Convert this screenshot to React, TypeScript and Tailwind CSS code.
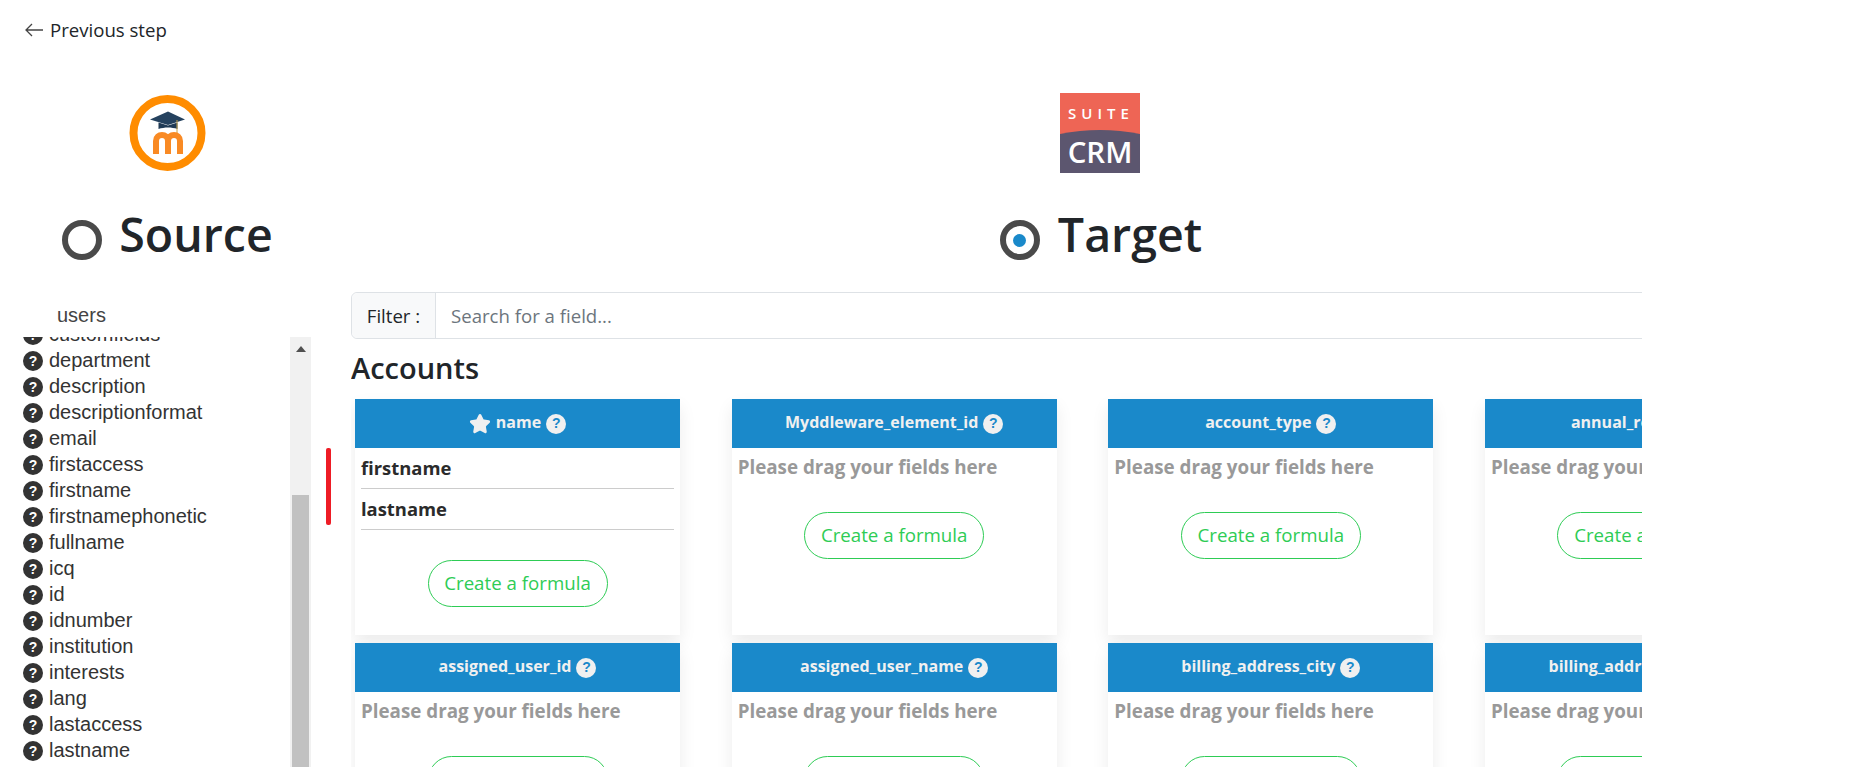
import { Star } from 'lucide-react'

const sourceFields = [
  'customfields', 'department', 'description', 'descriptionformat', 'email', 'firstaccess', 'firstname',
  'firstnamephonetic', 'fullname', 'icq', 'id', 'idnumber', 'institution', 'interests', 'lang', 'lastaccess',
  'lastname', 'lastnamephonetic',
]

const targetFields = [
  { name: 'name', required: true, mapped: ['firstname', 'lastname'] },
  { name: 'Myddleware_element_id' },
  { name: 'account_type' },
  { name: 'annual_revenue' },
  { name: 'assigned_user_id' },
  { name: 'assigned_user_name' },
  { name: 'billing_address_city' },
  { name: 'billing_address_street' },
]

function MoodleLogo() {
  return (
    <svg width="78" height="78" viewBox="0 0 78 78">
      <circle cx="38.5" cy="39" r="34" fill="#fff" stroke="#ff8c00" strokeWidth="8" />
      <path d="M21 25.500 39 17.500 56 25.500 39 31Z" fill="#25425f" />
      <path d="M29.500 28.500v6.500c6-2 13-2 19 0v-6.500l-9.500 3Z" fill="#1f3a55" />
      <path d="M48 26v13" stroke="#c9a24a" strokeWidth="1" />
      <path d="M27 60V47c0-8 12-8 12 0v13M39 47c0-8 12-8 12 0v13" fill="none" stroke="#f98a24" strokeWidth="6" />
    </svg>
  )
}

function SuiteLogo() {
  return (
    <svg width="80" height="80" viewBox="0 0 80 80">
      <rect width="80" height="80" fill="#ee6555" />
      <path d="M0 41Q40 33 80 41V80H0Z" fill="#5c566f" />
      <text x="41" y="26" textAnchor="middle" fill="#fff" fontFamily="Open Sans, sans-serif" fontWeight="600" fontSize="15" letterSpacing="5">SUITE</text>
      <text x="40" y="70" textAnchor="middle" fill="#fff" fontFamily="Open Sans, sans-serif" fontWeight="600" fontSize="29.5">CRM</text>
    </svg>
  )
}

function Radio({ checked }: { checked?: boolean }) {
  return (
    <span className="flex h-[40px] w-[40px] shrink-0 items-center justify-center rounded-full border-[6px] border-[#4a4a4a] bg-white">
      {checked && <span className="h-[13px] w-[13px] rounded-full bg-[#1a89ca]" />}
    </span>
  )
}

function Help({ light }: { light?: boolean }) {
  return (
    <span
      className={
        light
          ? "flex h-[20px] w-[20px] shrink-0 items-center justify-center rounded-full bg-[#f0f0f0] font-['Liberation_Sans',sans-serif] text-[14px] font-bold text-[#1a89ca]"
          : "flex h-[20px] w-[20px] shrink-0 items-center justify-center rounded-full bg-[#333333] font-['Liberation_Sans',sans-serif] text-[14px] font-bold text-white"
      }
    >
      ?
    </span>
  )
}

function FieldCard({ name, required, mapped }: { name: string; required?: boolean; mapped?: string[] }) {
  return (
    <div className="bg-white pb-[28px] shadow-[0_8px_16px_rgba(0,0,0,0.08)]">
      <div className="flex h-[49px] items-center justify-center gap-[5px] bg-[#1a89ca] text-[16px] font-bold text-[#f0f0f0]">
        {required && <Star className="h-[22px] w-[22px] fill-[#f0f0f0] text-[#f0f0f0]" />}
        <span className="-mt-[3px]">{name}</span>
        <Help light />
      </div>
      {mapped ? (
        <div className="px-[6px]">
          {mapped.map((m) => (
            <div key={m} className="flex h-[41px] items-center border-b border-[#cccccc] text-[18.4px] font-bold text-[#2b2b2b]">
              {m}
            </div>
          ))}
        </div>
      ) : (
        <div className="flex h-[33px] items-end px-[6px] text-[18.8px] leading-[27px] font-bold text-[#999999]">
          Please drag your fields here
        </div>
      )}
      <div className={mapped ? 'mt-[30px] flex justify-center' : 'mt-[31px] flex justify-center'}>
        <button className="h-[47px] w-[180px] rounded-full border border-[#2ecc55] bg-white text-[18.7px] text-[#2ecc55]">
          Create a formula
        </button>
      </div>
    </div>
  )
}

export default function App() {
  return (
    <div className="h-[767px] w-[1876px] overflow-hidden bg-white font-['Open_Sans',sans-serif] text-[#212529]">
      <div className="flex h-[60px] items-center gap-[7px] pl-[25px] text-[18.6px]">
        <svg width="18" height="14" viewBox="0 0 18 14" fill="none" stroke="#444" strokeWidth="1.3">
          <path d="M18 7H1M7 1 1 7l6 6" />
        </svg>
        Previous step
      </div>
      <div className="flex">
        <div className="w-[350px] shrink-0">
          <div className="flex w-[335px] flex-col items-center pt-[34px]">
            <MoodleLogo />
            <div className="mt-[30px] flex h-[76px] items-center gap-[17px] text-[46.5px] font-semibold">
              <Radio />
              <span className="-mt-[11px]">Source</span>
            </div>
          </div>
          <div className="mt-[22px] flex h-[30px] items-center pl-[57px] font-['Liberation_Sans',sans-serif] text-[20px] text-[#444444]">
            users
          </div>
          <div className="mt-[7px] flex">
            <div className="h-[440px] w-[290px] overflow-hidden font-['Liberation_Sans',sans-serif] text-[20px] text-[#333333]">
              <div className="-mt-[15px] pl-[23px]">
                {sourceFields.map((f) => (
                  <div key={f} className="flex h-[26px] items-center gap-[6px]">
                    <Help />
                    <span className="-mt-[2px]">{f}</span>
                  </div>
                ))}
              </div>
            </div>
            <div className="flex h-[440px] w-[21px] flex-col bg-[#f1f1f1]">
              <svg className="mx-auto mt-[9px]" width="10" height="6" viewBox="0 0 10 6">
                <path d="M5 0 10 6H0Z" fill="#505050" />
              </svg>
              <div className="mx-auto mt-[143px] w-[17px] flex-1 bg-[#c1c1c1]" />
            </div>
            <div className="mt-[111px] ml-[15px] h-[77px] w-[5px] rounded-[2px] bg-[#ee1c25]" />
          </div>
        </div>
        <div className="w-[1500px] shrink-0">
          <div className="flex flex-col items-center pt-[33px]">
            <SuiteLogo />
            <div className="mt-[29px] flex h-[76px] items-center gap-[18px] pl-[2px] text-[46.5px] font-semibold">
              <Radio checked />
              <span className="-mt-[11px]">Target</span>
            </div>
          </div>
          <div className="ml-[1px] w-[1291px] overflow-hidden pb-[20px]">
            <div className="mt-[14px] flex h-[47px] w-[1500px] rounded-[6px] border border-[#dee2e6] text-[18.6px]">
              <div className="flex w-[84px] items-center justify-center rounded-l-[6px] border-r border-[#dee2e6] bg-[#f8f9fa]">
                Filter :
              </div>
              <div className="flex flex-1 items-center pl-[15px] text-[#6c757d]">Search for a field...</div>
            </div>
            <h3 className="flex h-[60px] items-center pb-[2px] text-[29px] font-semibold text-[#212529]">Accounts</h3>
            <div className="grid w-[1500px] grid-cols-[repeat(4,325px)] gap-x-[51.67px] gap-y-[8px] pl-[4px]">
              {targetFields.map((f) => (
                <FieldCard key={f.name} {...f} />
              ))}
            </div>
          </div>
        </div>
      </div>
    </div>
  )
}
